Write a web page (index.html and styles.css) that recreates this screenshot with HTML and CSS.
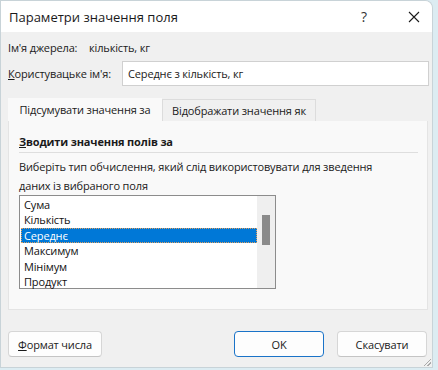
FILE: index.html
```html
<!DOCTYPE html>
<html lang="uk">
<head>
    <meta charset="UTF-8">
    <title>Параметри значення поля</title>
    <link rel="stylesheet" href="styles.css">
</head>
<body>

<div class="dialog">
    <div class="titlebar">
        <span class="title">Параметри значення поля</span>
        <span class="help">?</span>
        <svg class="close" width="12" height="12" viewBox="0 0 12 12">
            <path d="M1 1 L11 11 M11 1 L1 11" stroke="#1a1a1a" stroke-width="1.1" fill="none"/>
        </svg>
    </div>

    <div class="body">
        <div class="row source">
            <span class="label">Ім'я джерела:</span>
            <span>кількість, кг</span>
        </div>
        <div class="row custom">
            <span class="label"><u>К</u>ористувацьке ім'я:</span>
            <div class="input">Середнє з кількість, кг</div>
        </div>

        <div class="tabs">
            <div class="tab active">Підсумувати значення за</div>
            <div class="tab">Відображати значення як</div>
        </div>
        <div class="panel">
            <div class="group-title"><u>З</u>водити значення полів за</div>
            <p class="hint">Виберіть тип обчислення, який слід використовувати для зведення даних із вибраного поля</p>
            <div class="listbox">
                <ul class="items">
                    <li>Сума</li>
                    <li>Кількість</li>
                    <li class="selected">Середнє</li>
                    <li>Максимум</li>
                    <li>Мінімум</li>
                    <li>Продукт</li>
                </ul>
                <div class="scrollbar"><div class="thumb"></div></div>
            </div>
        </div>

        <div class="buttons">
            <button class="btn"><u>Ф</u>ормат числа</button>
            <span class="spacer"></span>
            <button class="btn primary">OK</button>
            <button class="btn">Скасувати</button>
        </div>
    </div>
    <div class="grip"></div>
</div>

</body>
</html>
```

FILE: styles.css
```css
body {
    margin: 0;
    padding: 1px 0 0 1px;
    width: 438px;
    height: 370px;
    box-sizing: border-box;
    background-color: #dcecf2;
    font-family: "Open Sans", "Noto Sans", sans-serif;
    font-size: 11px;
    letter-spacing: -0.15px;
    color: #1a1a1a;
    overflow: hidden;
}
.dialog {
    position: relative;
    width: 431px;
    height: 366px;
    background-color: #f0f0f0;
    border-radius: 0 7px 0 0;
    box-shadow: 0 0 0 1px #c8d3d8;
    display: flex;
    flex-direction: column;
}
.titlebar {
    height: 31px;
    background-color: #ffffff;
    border-radius: 0 7px 0 0;
    display: flex;
    align-items: center;
    padding: 0 12px 0 8px;
}
.title {
    font-size: 13px;
    letter-spacing: 0;
    flex: 1;
}
.help {
    font-size: 14px;
    color: #333;
    margin-right: 41px;
}
.close {
    display: block;
}
.body {
    flex: 1;
    padding: 0 3px 0 7px;
    display: flex;
    flex-direction: column;
}
.row {
    display: flex;
    align-items: center;
    white-space: nowrap;
}
.label {
    flex-shrink: 0;
}
.source {
    margin-top: 7px;
    height: 16px;
}
.source .label {
    width: 81px;
}
.custom {
    margin-top: 6px;
    height: 25px;
}
.custom .label {
    width: 114px;
}
.input {
    flex: 1;
    height: 25px;
    box-sizing: border-box;
    background-color: #ffffff;
    border: 1px solid #d0d0d0;
    padding: 3px 5px;
    line-height: 17px;
}
.tabs {
    display: flex;
    margin-top: 12px;
    height: 23px;
    align-items: flex-end;
}
.tab {
    width: 154px;
    height: 22px;
    box-sizing: border-box;
    border: 1px solid #dcdcdc;
    border-bottom: none;
    background-color: #f0f0f0;
    text-align: center;
    line-height: 21px;
    white-space: nowrap;
}
.tab.active {
    height: 23px;
    background-color: #f9f9f9;
    border-color: #f9f9f9;
    line-height: 22px;
}
.panel {
    width: 420px;
    height: 189px;
    box-sizing: border-box;
    background-color: #f9f9f9;
    border: 1px solid #e4e4e4;
    border-top: none;
    padding: 13px 9px 0 10px;
}
.group-title {
    font-weight: bold;
    line-height: 16px;
    padding-bottom: 2px;
    border-bottom: 1px solid #dedede;
}
.hint {
    margin: 4px 0 0 0;
    width: 375px;
    line-height: 19px;
}
.listbox {
    width: 257px;
    height: 94px;
    box-sizing: border-box;
    border: 1px solid #8c8c8c;
    background-color: #ffffff;
    display: flex;
}
.items {
    list-style: none;
    margin: 0;
    padding: 1px 0 0 1px;
    flex: 1;
}
.items li {
    height: 15.4px;
    line-height: 15.4px;
    padding-left: 3px;
    color: #111;
}
.items li.selected {
    background-color: #0078d7;
    color: #ffffff;
    outline: 1px dotted #e0a060;
    outline-offset: -1px;
}
.scrollbar {
    width: 18px;
    background-color: #efefef;
    padding-top: 19px;
}
.thumb {
    width: 8px;
    height: 30px;
    margin-left: 5px;
    background-color: #8a8a8a;
}
.buttons {
    display: flex;
    margin-top: 21px;
    padding-right: 2px;
    gap: 13px;
}
.spacer {
    flex: 1;
}
.btn {
    height: 26px;
    width: 90px;
    font-family: inherit;
    font-size: 11px;
    letter-spacing: -0.15px;
    color: #1a1a1a;
    background-color: #fdfdfd;
    border: 1px solid #d6d6d6;
    border-bottom-color: #c4c4c4;
    border-radius: 4px;
    padding: 0;
}
.btn:first-child {
    width: 94px;
}
.btn.primary {
    border: 1px solid #1a73c8;
}
.grip {
    position: absolute;
    right: 1px;
    bottom: 1px;
    width: 8px;
    height: 8px;
    background: linear-gradient(135deg, transparent 55%, #aaa 55%, #aaa 62%, transparent 62%, transparent 75%, #aaa 75%, #aaa 82%, transparent 82%);
}
```
